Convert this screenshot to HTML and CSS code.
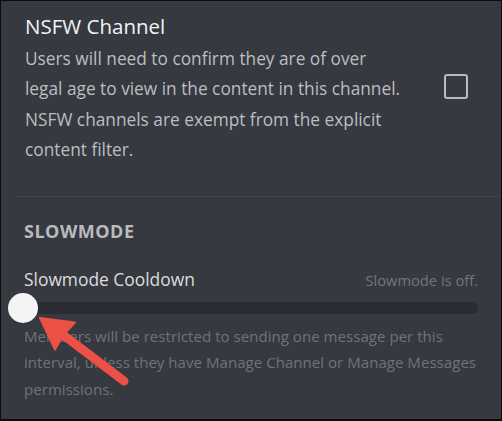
FILE: index.html
```html
<!DOCTYPE html>
<html>
<head>
<meta charset="utf-8">
<link rel="stylesheet" href="styles.css">
</head>
<body>
<div class="frame">
  <section class="nsfw">
    <div class="nsfw-text">
      <h2 class="title">NSFW Channel</h2>
      <p class="desc">Users will need to confirm they are of over<br>legal age to view in the content in this channel.<br>NSFW channels are exempt from the explicit<br>content filter.</p>
    </div>
    <div class="check-col">
      <span class="checkbox"></span>
    </div>
  </section>
  <hr class="divider">
  <section class="slowmode">
    <h3 class="section-head">SLOWMODE</h3>
    <div class="label-row">
      <span class="label">Slowmode Cooldown</span>
      <span class="status">Slowmode is off.</span>
    </div>
    <div class="slider">
      <div class="track"></div>
      <div class="knob"></div>
    </div>
    <p class="help">Members will be restricted to sending one message per this interval, unless they have Manage Channel or Manage Messages permissions.</p>
  </section>
  <svg class="arrow" width="502" height="421" viewBox="0 0 502 421">
    <line x1="124" y1="381" x2="58" y2="331" stroke="#ec5146" stroke-width="9" stroke-linecap="round"/>
    <path d="M40 318 L75 322.5 L64 334 L55 349.5 Z" fill="#ec5146" stroke="#ec5146" stroke-width="2" stroke-linejoin="round"/>
  </svg>
</div>
</body>
</html>
```
FILE: styles.css
```css
* { box-sizing: border-box; }
html, body { margin: 0; padding: 0; background: #000; }
body { font-family: "Open Sans", "Noto Sans", sans-serif; }
.frame {
  position: relative;
  width: 502px;
  height: 421px;
  background: #36393f;
  border: 1px solid #0c0c0d;
  border-bottom-width: 2px;
  overflow: hidden;
}
.nsfw {
  display: flex;
  padding: 12px 0 0 24px;
}
.nsfw-text { width: 400px; }
.title {
  margin: 0;
  font-size: 20.5px;
  line-height: 26px;
  font-weight: 400;
  color: #f2f3f5;
}
.desc {
  margin: 5px 0 0;
  font-size: 17.3px;
  line-height: 30.4px;
  color: #bcbec1;
  white-space: nowrap;
}
.check-col {
  flex: 1;
  display: flex;
  align-items: center;
  justify-content: flex-end;
  padding: 0 33px 5px 0;
}
.checkbox {
  display: block;
  width: 24px;
  height: 25px;
  border: 2.5px solid #b9bbbe;
  border-radius: 3px;
}
.divider {
  margin: 30px 0 0 15px;
  border: 0;
  height: 1px;
  background: #41444a;
}
.slowmode { padding: 0 23px 0 23px; }
.section-head {
  margin: 23px 0 0;
  font-size: 18px;
  line-height: 22px;
  font-weight: 700;
  letter-spacing: 0.5px;
  color: #b9bbbe;
}
.label-row {
  display: flex;
  justify-content: space-between;
  align-items: baseline;
  margin-top: 25px;
}
.label {
  font-size: 17.4px;
  line-height: 24px;
  color: #dcddde;
}
.status {
  font-size: 14.7px;
  color: #72767d;
}
.slider {
  position: relative;
  height: 12px;
  margin-top: 11px;
}
.track {
  height: 12px;
  border-radius: 6px;
  background: #2a2c31;
}
.knob {
  position: absolute;
  left: -16px;
  top: -9px;
  width: 30px;
  height: 30px;
  border-radius: 50%;
  background: #f4f4f5;
}
.help {
  margin: 9px 0 0;
  width: 455px;
  font-size: 15.1px;
  line-height: 26.5px;
  color: #6f737a;
}
.arrow {
  position: absolute;
  left: -1px;
  top: -1px;
}
```
